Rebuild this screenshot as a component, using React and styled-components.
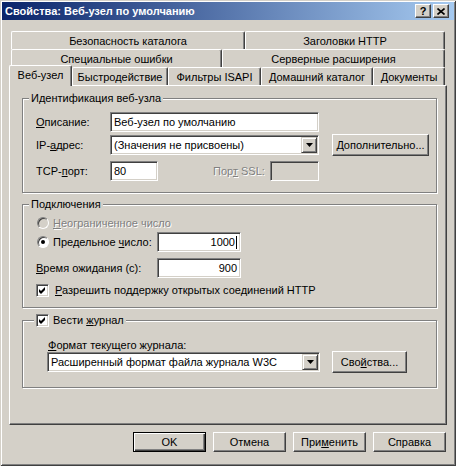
import React from 'react';
import styled, { createGlobalStyle, css } from 'styled-components';

const GlobalStyle = createGlobalStyle`
  html, body {
    margin: 0;
    padding: 0;
    background: #d4d0c8;
  }
  body {
    font-family: "Liberation Sans", Arial, sans-serif;
    font-size: 11px;
    color: #000;
  }
  * {
    box-sizing: border-box;
  }
  u {
    text-decoration: underline;
    text-underline-offset: 1px;
  }
`;

const Window = styled.div`
  width: 456px;
  height: 466px;
  padding: 2px;
  background: #d4d0c8;
  box-shadow: inset 1px 1px #d4d0c8, inset -1px -1px #404040,
    inset 2px 2px #fff, inset -2px -2px #808080;
  display: flex;
  flex-direction: column;
`;

const TitleBar = styled.div`
  height: 18px;
  display: flex;
  align-items: center;
  padding: 0 5px 0 3px;
  background: linear-gradient(to right, #0a246a, #a6caf0);
  color: #fff;
  font-weight: bold;
  font-size: 11px;
`;

const TitleText = styled.span`
  flex: 1;
  white-space: nowrap;
`;

const CaptionButton = styled.div`
  width: 16px;
  height: 14px;
  margin-left: ${p => p.$gap || 0}px;
  background: #d4d0c8;
  border: 1px solid;
  border-color: #fff #404040 #404040 #fff;
  box-shadow: inset -1px -1px #808080;
  display: flex;
  align-items: center;
  justify-content: center;
  color: #000;
  font-weight: bold;
  font-size: 11px;
  line-height: 1;
`;

const TabControl = styled.div`
  width: 438px;
  margin: 11px 0 0 7px;
  display: flex;
  flex-direction: column;
`;

const TabRow = styled.div`
  display: flex;
  align-items: flex-end;
  height: ${p => (p.$front ? 20 : 18)}px;
  margin-top: ${p => (p.$front ? -2 : 0)}px;
  padding-left: ${p => (p.$front ? 0 : 2)}px;
`;

const Tab = styled.div`
  width: ${p => p.$w}px;
  height: 18px;
  flex-shrink: 0;
  display: flex;
  align-items: center;
  justify-content: center;
  white-space: nowrap;
  background: #d4d0c8;
  border-top: 1px solid #fff;
  border-left: 1px solid #fff;
  border-right: 1px solid #404040;
  box-shadow: inset -1px 0 #808080;
  border-radius: 2px 2px 0 0;

  ${p =>
    p.$active &&
    css`
      height: 21px;
      margin-bottom: -1px;
      padding-bottom: 2px;
      position: relative;
      z-index: 1;
    `}
`;

const Panel = styled.div`
  height: 340px;
  border-top: 1px solid #fff;
  border-left: 1px solid #fff;
  border-right: 1px solid #404040;
  border-bottom: 1px solid #404040;
  box-shadow: inset -1px -1px #808080;
  padding: 6px 9px 0 12px;
`;

const Group = styled.fieldset`
  margin: ${p => p.$mt || 0}px 0 0 0;
  padding: 0 0 ${p => p.$pb || 0}px 0;
  min-width: 0;
  border: 1px solid #808080;
  box-shadow: inset 1px 1px #fff, 1px 1px #fff;
`;

const Legend = styled.legend`
  margin-left: ${p => p.$ml || 6}px;
  padding: 0 2px;
  height: ${p => p.$h || 13}px;
  line-height: 13px;
  background: #d4d0c8;
  display: flex;
  align-items: center;
  white-space: nowrap;
`;

const FormRow = styled.div`
  display: flex;
  align-items: center;
  height: ${p => p.$h || 20}px;
  margin-top: ${p => p.$mt || 0}px;
  margin-left: ${p => (p.$ml === undefined ? 13 : p.$ml)}px;
`;

const Label = styled.span`
  width: ${p => (p.$w ? `${p.$w}px` : 'auto')};
  flex-shrink: 0;
  margin-left: ${p => p.$ml || 0}px;
  white-space: nowrap;
  ${p =>
    p.$disabled &&
    css`
      color: #808080;
      text-shadow: 1px 1px #fff;
    `}
`;

const Field = styled.div`
  width: ${p => p.$w}px;
  height: 20px;
  flex-shrink: 0;
  background: ${p => (p.$disabled ? '#d4d0c8' : '#fff')};
  border: 1px solid;
  border-color: #808080 #fff #fff #808080;
  box-shadow: inset 1px 1px #404040, inset -1px -1px #d4d0c8;
  padding: ${p => (p.$combo ? '1px 1px 1px 3px' : '0 3px')};
  display: flex;
  align-items: center;
  justify-content: ${p => (p.$right ? 'flex-end' : 'flex-start')};
  white-space: nowrap;
  overflow: hidden;
`;

const ComboText = styled.span`
  flex: 1;
  overflow: hidden;
`;

const DropButton = styled.div`
  width: 16px;
  height: 16px;
  flex-shrink: 0;
  background: #d4d0c8;
  border: 1px solid;
  border-color: #d4d0c8 #404040 #404040 #d4d0c8;
  box-shadow: inset 1px 1px #fff, inset -1px -1px #808080;
  display: flex;
  align-items: center;
  justify-content: center;
`;

const Caret = styled.span`
  width: 1px;
  height: 13px;
  margin-left: 1px;
  background: #000;
`;

const Button = styled.div`
  width: ${p => p.$w}px;
  height: ${p => p.$h || 22}px;
  margin-left: ${p => p.$ml || 0}px;
  flex-shrink: 0;
  display: flex;
  align-items: center;
  justify-content: center;
  white-space: nowrap;
  background: #d4d0c8;
  border: 1px solid;
  border-color: #fff #404040 #404040 #fff;
  box-shadow: inset -1px -1px #808080;

  ${p =>
    p.$default &&
    css`
      border-color: #000;
      box-shadow: inset 1px 1px #fff, inset -1px -1px #404040,
        inset -2px -2px #808080;
    `}
`;

const Radio = styled.div`
  width: 12px;
  height: 12px;
  flex-shrink: 0;
  border-radius: 50%;
  border: 1px solid;
  border-color: #808080 #fff #fff #808080;
  box-shadow: inset 1px 1px #404040;
  background: ${p => (p.$disabled ? '#d4d0c8' : '#fff')};
  display: flex;
  align-items: center;
  justify-content: center;

  &::after {
    content: '';
    display: ${p => (p.$checked ? 'block' : 'none')};
    width: 4px;
    height: 4px;
    border-radius: 50%;
    background: #000;
  }
`;

const CheckBox = styled.div`
  width: 13px;
  height: 13px;
  flex-shrink: 0;
  background: #fff;
  border: 1px solid;
  border-color: #808080 #fff #fff #808080;
  box-shadow: inset 1px 1px #404040, inset -1px -1px #d4d0c8;
  display: flex;
  align-items: center;
  justify-content: center;
`;

const ButtonRow = styled.div`
  display: flex;
  justify-content: flex-end;
  gap: 7px;
  margin: 7px 8px 0 0;
`;

const Arrow = () => (
  <svg width="7" height="4" viewBox="0 0 7 4">
    <path d="M0 0 H7 L3.5 4 Z" fill="#000" />
  </svg>
);

const Tick = () => (
  <svg width="7" height="7" viewBox="0 0 7 7">
    <path d="M0 2 L2 4 L6 0 V3 L2 7 L0 5 Z" fill="#000" />
  </svg>
);

const CloseGlyph = () => (
  <svg width="8" height="7" viewBox="0 0 8 7">
    <path d="M0.5 0.5 L7.5 6.5 M7.5 0.5 L0.5 6.5" stroke="#000" strokeWidth="1.6" />
  </svg>
);

const Combo = ({ w, children }) => (
  <Field $w={w} $combo>
    <ComboText>{children}</ComboText>
    <DropButton>
      <Arrow />
    </DropButton>
  </Field>
);

export default function App() {
  return (
    <>
      <GlobalStyle />
      <Window>
        <TitleBar>
          <TitleText>Свойства: Веб-узел по умолчанию</TitleText>
          <CaptionButton>?</CaptionButton>
          <CaptionButton $gap={2}>
            <CloseGlyph />
          </CaptionButton>
        </TitleBar>

        <TabControl>
          <TabRow>
            <Tab $w={234}>Безопасность каталога</Tab>
            <Tab $w={200}>Заголовки HTTP</Tab>
          </TabRow>
          <TabRow>
            <Tab $w={211}>Специальные ошибки</Tab>
            <Tab $w={223}>Серверные расширения</Tab>
          </TabRow>
          <TabRow $front>
            <Tab $w={63} $active>Веб-узел</Tab>
            <Tab $w={96}>Быстродействие</Tab>
            <Tab $w={93}>Фильтры ISAPI</Tab>
            <Tab $w={112}>Домашний каталог</Tab>
            <Tab $w={72}>Документы</Tab>
          </TabRow>

          <Panel>
            <Group $pb={11}>
              <Legend>Идентификация веб-узла</Legend>
              <FormRow $mt={7}>
                <Label $w={74}><u>О</u>писание:</Label>
                <Field $w={209}>Веб-узел по умолчанию</Field>
              </FormRow>
              <FormRow $mt={2} $h={22}>
                <Label $w={74}>IP-<u>а</u>дрес:</Label>
                <Combo w={209}>(Значения не присвоены)</Combo>
                <Button $w={97} $ml={13}><u>Д</u>ополнительно...</Button>
              </FormRow>
              <FormRow $mt={5}>
                <Label $w={74}>TCP-<u>п</u>орт:</Label>
                <Field $w={48}>80</Field>
                <Label $w={57} $ml={55} $disabled>Пор<u>т</u> SSL:</Label>
                <Field $w={49} $disabled />
              </FormRow>
            </Group>

            <Group $mt={5} $pb={10}>
              <Legend>Подключения</Legend>
              <FormRow $mt={5} $h={14} $ml={14}>
                <Radio $disabled />
                <Label $ml={4} $disabled><u>Н</u>еограниченное число</Label>
              </FormRow>
              <FormRow $mt={2} $ml={14}>
                <Radio $checked />
                <Label $ml={4} $w={104}>Предельное <u>ч</u>исло:</Label>
                <Field $w={84} $right>
                  1000
                  <Caret />
                </Field>
              </FormRow>
              <FormRow $mt={6}>
                <Label $w={121}><u>В</u>ремя ожидания (с):</Label>
                <Field $w={84} $right>900</Field>
              </FormRow>
              <FormRow $mt={5} $h={14}>
                <CheckBox>
                  <Tick />
                </CheckBox>
                <Label $ml={6}><u>Р</u>азрешить поддержку открытых соединений HTTP</Label>
              </FormRow>
            </Group>

            <Group $mt={5} $pb={14}>
              <Legend $ml={11} $h={14}>
                <CheckBox>
                  <Tick />
                </CheckBox>
                <Label $ml={4}>Вести <u>ж</u>урнал</Label>
              </Legend>
              <FormRow $mt={11} $h={13} $ml={25}>
                <Label><u>Ф</u>ормат текущего журнала:</Label>
              </FormRow>
              <FormRow $h={22} $ml={24}>
                <Combo w={273}>Расширенный формат файла журнала W3C</Combo>
                <Button $w={75} $ml={12}>Сво<u>й</u>ства...</Button>
              </FormRow>
            </Group>
          </Panel>
        </TabControl>

        <ButtonRow>
          <Button $w={73} $h={20} $default>OK</Button>
          <Button $w={73} $h={20}>Отмена</Button>
          <Button $w={73} $h={20}>При<u>м</u>енить</Button>
          <Button $w={73} $h={20}>Справка</Button>
        </ButtonRow>
      </Window>
    </>
  );
}
